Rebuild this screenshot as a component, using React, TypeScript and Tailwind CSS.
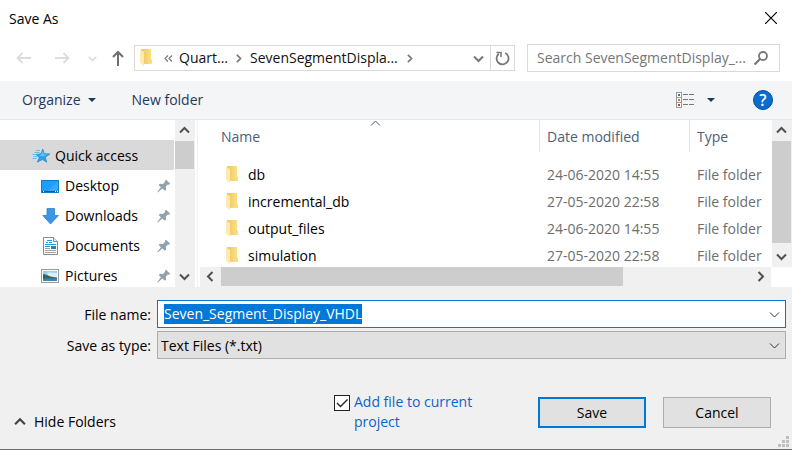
import { useEffect, useRef } from "react";
import type { ReactNode } from "react";

type ChevronProps = { dir: "up" | "down" | "left" | "right"; className: string; width?: number };

const chevronPoints = {
  up: "1,7.5 5.5,3 10,7.5",
  down: "1,3.5 5.5,8 10,3.5",
  left: "7.5,1 3,5.5 7.5,10",
  right: "3.5,1 8,5.5 3.5,10",
};

function Chevron({ dir, className, width = 2 }: ChevronProps) {
  return (
    <svg viewBox="0 0 11 11" className={className} fill="none" stroke="currentColor" strokeWidth={width} aria-hidden="true">
      <polyline points={chevronPoints[dir]} />
    </svg>
  );
}

function FolderIcon() {
  return (
    <svg viewBox="0 0 12 18" className="h-[18px] w-3 shrink-0" aria-hidden="true">
      <defs>
        <linearGradient id="folder-body" x1="0" x2="1">
          <stop offset="0.2" stopColor="#f0cb69" />
          <stop offset="0.8" stopColor="#fbdc7e" />
        </linearGradient>
      </defs>
      <path d="M1 0h10v10l1 1v4H3L1 12z" fill="url(#folder-body)" />
      <path d="M0 1l4 2v14l-1.500-1L0 13.500z" fill="#ffeab0" />
    </svg>
  );
}

function PinIcon() {
  return (
    <svg viewBox="0 0 14 14" className="size-[14px]" aria-hidden="true">
      <path d="M9 0.800l4.200 4-1.200 1-1.200-0.200-2 2.200 0.400 2.600-1.200 1.400-2.700-2.400L0.800 13.400l-0.500-0.500 3.600-4.600-2.200-2.300 1.300-1.200 2.900 0.200L8 2.900 7.900 1.800z" fill="#93a1ab" />
    </svg>
  );
}

function StarIcon() {
  return (
    <svg viewBox="0 0 19 16" className="h-4 w-[19px]" aria-hidden="true">
      <path d="M10.800 1l1.500 4.700 5.600 0.300-4.500 3.200 1.300 5-4.300-2.800-5 2.800 1.900-5-3.300-2.800 4.800-0.500z" fill="#2ba3ec" stroke="#1d8ad2" strokeWidth="0.700" />
      <path d="M10.700 3l1.200 3.500 3.800 0.300-5.200 1.500-3.300-0.800 2.100-0.700z" fill="#63c7fb" />
      <path d="M4 2.500h4M2.500 4.500h5M0.500 6.500h4M1.500 8.500h4M0.500 10.500h4" stroke="#51b0ea" strokeWidth="0.800" />
    </svg>
  );
}

function DesktopIcon() {
  return (
    <svg viewBox="0 0 18 13" className="h-[13px] w-[18px]" aria-hidden="true">
      <rect x="0.500" y="0.500" width="17" height="12" fill="#1e9dfd" stroke="#0f7bc9" />
      <path d="M17 1v10H7z" fill="#35aaff" />
      <path d="M1 11.500h16" stroke="#0a5a9c" />
      <path d="M2 11.500h1M14 11.500h1M16 11.500h1" stroke="#fff" />
    </svg>
  );
}

function DownloadIcon() {
  return (
    <svg viewBox="0 0 17 17" className="size-[17px]" aria-hidden="true">
      <path d="M5 0.500h7.500v7h4L8.500 16 0.800 7.500H5z" fill="#3b97e6" stroke="#2f80cc" strokeWidth="0.800" />
    </svg>
  );
}

function DocumentIcon() {
  return (
    <svg viewBox="0 0 15 18" className="h-[18px] w-[15px]" aria-hidden="true">
      <path d="M0.500 0.500h10l4 4v13h-14z" fill="#fff" stroke="#8a8a8a" />
      <path d="M10.500 0.500v4h4" fill="#eee" stroke="#8a8a8a" />
      <path d="M4 3.500h5M3 5.500h2M6 5.500h3M2 7.500h11M2 9.500h5" stroke="#2796e0" />
      <rect x="8" y="9" width="5" height="3" fill="#2b7fb5" />
      <path d="M2 11.500h5M2 13.500h11M2 15.500h11" stroke="#a0a0a0" />
    </svg>
  );
}

function PictureIcon() {
  return (
    <svg viewBox="0 0 18 14" className="h-[14px] w-[18px]" aria-hidden="true">
      <rect x="0.500" y="0.500" width="17" height="13" fill="#fff" stroke="#9a9a9a" />
      <rect x="2" y="2" width="14" height="10" fill="#9ad0f6" />
      <path d="M6 4c4-1 7 0 10 0v4H8z" fill="#dceffc" />
      <path d="M2 5c3 0 6 3 14 3.500V10H2z" fill="#34674f" />
      <path d="M2 10c4-1 9 0 14-1v3H2z" fill="#3f83bd" />
    </svg>
  );
}

type Place = { name: string; icon: ReactNode };

const places: Place[] = [
  { name: "Desktop", icon: <DesktopIcon /> },
  { name: "Downloads", icon: <DownloadIcon /> },
  { name: "Documents", icon: <DocumentIcon /> },
  { name: "Pictures", icon: <PictureIcon /> },
];

const files = [
  { name: "db", date: "24-06-2020 14:55" },
  { name: "incremental_db", date: "27-05-2020 22:58" },
  { name: "output_files", date: "24-06-2020 14:55" },
  { name: "simulation", date: "27-05-2020 22:58" },
];

function VerticalScrollbar({ thumb }: { thumb: string }) {
  return (
    <div className="flex w-5 shrink-0 flex-col bg-[#f0f0f0] pr-px text-[#505050]">
      <button aria-label="Scroll up" className="flex h-[21px] shrink-0 items-center justify-center">
        <Chevron dir="up" className="size-[11px]" />
      </button>
      <div className="flex-1">
        <div className={`${thumb} bg-[#cdcdcd]`} />
      </div>
      <button aria-label="Scroll down" className="flex h-[21px] shrink-0 items-center justify-center">
        <Chevron dir="down" className="size-[11px]" />
      </button>
    </div>
  );
}

function TitleBar() {
  return (
    <header className="flex h-9 items-center justify-between pr-[14px] pl-[9px]">
      <h1 className="pt-[2px]">Save As</h1>
      <button aria-label="Close" className="p-px">
        <svg viewBox="0 0 12 12" className="size-3" stroke="#000" strokeWidth="1.200" aria-hidden="true">
          <path d="M0 0l12 12M12 0L0 12" />
        </svg>
      </button>
    </header>
  );
}

function NavigationBar() {
  return (
    <nav className="flex h-[45px] items-center pr-3 pb-[1px] pl-4">
      <button aria-label="Back" className="w-[15px] text-[#dcdcdc]">
        <svg viewBox="0 0 15 12" className="h-3 w-[15px]" fill="none" stroke="currentColor" strokeWidth="1.800" aria-hidden="true">
          <path d="M15 6H1.500M6.500 1l-5 5 5 5" />
        </svg>
      </button>
      <button aria-label="Forward" className="ml-6 w-[15px] text-[#dcdcdc]">
        <svg viewBox="0 0 15 12" className="h-3 w-[15px]" fill="none" stroke="currentColor" strokeWidth="1.800" aria-hidden="true">
          <path d="M0 6h13.500M8.500 1l5 5-5 5" />
        </svg>
      </button>
      <button aria-label="Recent locations" className="ml-[18px] text-[#dcdcdc]">
        <Chevron dir="down" className="size-[9px]" />
      </button>
      <button aria-label="Up" className="ml-[15px] text-[#6e6e6e]">
        <svg viewBox="0 0 12 16" className="h-4 w-3" fill="none" stroke="currentColor" strokeWidth="2" aria-hidden="true">
          <path d="M6 16V2M1 7l5-5 5 5" />
        </svg>
      </button>
      <div className="ml-[10px] flex h-[26px] min-w-0 flex-1 items-stretch border border-[#d9d9d9] text-[#111]">
        <div className="flex min-w-0 flex-1 items-center overflow-hidden pl-[5px]">
          <FolderIcon />
          <svg viewBox="0 0 9 7" className="ml-3 h-[7px] w-[9px] shrink-0" fill="none" stroke="#777" strokeWidth="1.200" aria-hidden="true">
            <path d="M4 0.500l-3 3 3 3M8 0.500l-3 3 3 3" />
          </svg>
          <button className="ml-[6px] shrink-0">Quart...</button>
          <Chevron dir="right" className="ml-[6px] size-[9px] shrink-0 text-[#777]" />
          <button className="ml-[7px] shrink-0">SevenSegmentDispla...</button>
          <Chevron dir="right" className="ml-[7px] size-[9px] shrink-0 text-[#777]" />
        </div>
        <button aria-label="Previous locations" className="px-[6px] text-[#777]">
          <Chevron dir="down" className="size-[11px]" />
        </button>
        <button aria-label="Refresh" className="flex w-6 items-center justify-center border-l border-[#d9d9d9]">
          <svg viewBox="0 0 15 15" className="size-[15px]" fill="none" stroke="#777" strokeWidth="1.800" aria-hidden="true">
            <path d="M10.200 2a6 6 0 1 1-6.400 0.700" />
            <path d="M1.500 1.500H6v4.500" strokeWidth="1.500" />
          </svg>
        </button>
      </div>
      <div className="ml-3 flex h-7 w-[253px] items-center border border-[#d9d9d9] pr-[11px] pl-[9px]">
        <input
          type="text"
          aria-label="Search"
          placeholder="Search SevenSegmentDisplay_..."
          className="min-w-0 flex-1 outline-none placeholder:text-[#767676]"
        />
        <svg viewBox="0 0 14 14" className="size-[14px] shrink-0" fill="none" stroke="#777" aria-hidden="true">
          <circle cx="9" cy="5" r="4" strokeWidth="1.800" />
          <path d="M6 8l-5.500 5.500" strokeWidth="2.200" />
        </svg>
      </div>
    </nav>
  );
}

function Toolbar() {
  return (
    <div className="flex h-[39px] items-center border-b border-[#e5e6e8] bg-[#f4f5f7] pr-[19px] pl-[22px] text-[#1e395b]">
      <button className="flex items-center gap-[7px]">
        Organize
        <svg viewBox="0 0 8 4" className="h-1 w-2" aria-hidden="true">
          <path d="M0 0h8L4 4z" fill="currentColor" />
        </svg>
      </button>
      <button className="ml-9">New folder</button>
      <div className="flex-1" />
      <button aria-label="Change view">
        <svg viewBox="0 0 18 16" className="h-4 w-[18px]" shapeRendering="crispEdges" aria-hidden="true">
          <path d="M0.500 0.500h5v5h-5zM0.500 5.500h5v5h-5zM0.500 10.500h5v5h-5z" fill="#fff" stroke="#999" />
          <path d="M7 2.500h5M13 2.500h5M7 7.500h5M13 7.500h5M7 12.500h5M13 12.500h5" stroke="#777" />
          <path d="M2 2h2v2H2z" fill="#2779b8" />
          <path d="M2 7h2v2H2z" fill="#b78332" />
          <path d="M2 12h2v2H2z" fill="#d03a1c" />
        </svg>
      </button>
      <button aria-label="More view options" className="ml-[13px]">
        <svg viewBox="0 0 8 4" className="h-1 w-2" aria-hidden="true">
          <path d="M0 0h8L4 4z" fill="currentColor" />
        </svg>
      </button>
      <button
        aria-label="Help"
        className="ml-[38px] flex size-5 items-center justify-center rounded-full border border-[#084f96] bg-[#0a6ccf] text-base font-semibold text-white"
      >
        ?
      </button>
    </div>
  );
}

function FolderTree() {
  return (
    <aside className="flex w-[195px] shrink-0">
      <ul className="min-w-0 flex-1 overflow-hidden pt-5 pr-px">
        <li className="flex h-[30px] items-center gap-1 bg-[#d9d9d9] pt-[2px] pl-8">
          <StarIcon />
          Quick access
        </li>
        {places.map((place) => (
          <li key={place.name} className="flex h-[30px] items-center pt-[2px] pr-[3px] pl-10">
            <span className="flex w-5 justify-center">{place.icon}</span>
            <span className="flex-1 pl-[5px]">{place.name}</span>
            <PinIcon />
          </li>
        ))}
      </ul>
      <VerticalScrollbar thumb="h-7" />
    </aside>
  );
}

function FileList() {
  return (
    <section className="ml-[2px] flex min-w-0 flex-1 flex-col border-l border-[#f0f0f0] pl-[2px]">
      <div className="flex h-[147px]">
        <div className="min-w-0 flex-1 overflow-hidden">
          <table className="w-full table-fixed border-collapse text-left whitespace-nowrap">
            <thead className="text-[#4c607a]">
              <tr>
                <th className="h-[41px] p-0 align-top font-normal">
                  <div className="relative flex h-8 items-center border-r border-[#e5e5e5] pt-px pl-[21px]">
                    Name
                    <Chevron dir="up" width={1} className="absolute -top-[2px] left-1/2 size-[11px] text-[#555]" />
                  </div>
                </th>
                <th className="w-[150px] p-0 align-top font-normal">
                  <div className="flex h-8 items-center border-r border-[#e5e5e5] pt-px pl-[7px]">Date modified</div>
                </th>
                <th className="w-[82px] p-0 align-top font-normal">
                  <div className="flex h-8 items-center pt-px pl-[7px]">Type</div>
                </th>
              </tr>
            </thead>
            <tbody>
              {files.map((file) => (
                <tr key={file.name} className="h-[27px]">
                  <td className="p-0">
                    <div className="flex items-center gap-[10px] pl-[26px]">
                      <FolderIcon />
                      {file.name}
                    </div>
                  </td>
                  <td className="p-0 pl-[7px] text-[#6d6d6d]">{file.date}</td>
                  <td className="p-0 pl-[7px] text-[#6d6d6d]">File folder</td>
                </tr>
              ))}
            </tbody>
          </table>
        </div>
        <VerticalScrollbar thumb="h-[102px]" />
      </div>
      <div className="mr-[21px] flex h-5 bg-[#f0f0f0] pb-px text-[#505050]">
        <button aria-label="Scroll left" className="flex w-[21px] items-center justify-center">
          <Chevron dir="left" className="size-[11px]" />
        </button>
        <div className="flex-1">
          <div className="h-full w-[76%] bg-[#cdcdcd]" />
        </div>
        <button aria-label="Scroll right" className="flex w-[21px] items-center justify-center">
          <Chevron dir="right" className="size-[11px]" />
        </button>
      </div>
    </section>
  );
}

function SaveForm() {
  const nameRef = useRef<HTMLInputElement>(null);

  useEffect(() => {
    nameRef.current?.focus();
    nameRef.current?.select();
  }, []);

  return (
    <form className="flex flex-1 flex-col bg-[#f0f0f0]" onSubmit={(event) => event.preventDefault()}>
      <div className="grid grid-cols-[151px_1fr] items-center gap-x-[6px] gap-y-[3px] pt-[13px] pr-[6px]">
        <label htmlFor="file-name" className="pt-[2px] text-right">
          File name:
        </label>
        <div className="flex h-7 items-center border border-[#0078d7] bg-white pr-[5px] pl-[6px]">
          <input
            ref={nameRef}
            id="file-name"
            type="text"
            defaultValue="Seven_Segment_Display_VHDL"
            className="min-w-0 flex-1 caret-transparent outline-none selection:bg-[#0078d7] selection:text-white"
          />
          <button type="button" aria-label="Previous file names">
            <Chevron dir="down" width={1} className="size-[11px] text-[#333]" />
          </button>
        </div>
        <label htmlFor="file-type" className="pt-[2px] text-right">
          Save as type:
        </label>
        <div className="relative">
          <select
            id="file-type"
            className="block h-7 w-full appearance-none rounded-none border border-[#adadad] bg-[#e1e1e1] pt-[2px] pr-6 pl-[3px] outline-none"
          >
            <option>Text Files (*.txt)</option>
          </select>
          <Chevron dir="down" width={1} className="pointer-events-none absolute top-[9px] right-[6px] size-[11px] text-[#333]" />
        </div>
      </div>
      <div className="flex flex-1 items-end pr-[21px] pb-[17px] pl-[14px]">
        <button type="button" className="flex items-center gap-2">
          <Chevron dir="up" className="size-[12px] text-[#444]" />
          Hide Folders
        </button>
        <div className="flex-1" />
        <div className="mr-[43px] flex w-[161px] items-start gap-1">
          <span className="relative mt-[3px] size-4 shrink-0">
            <input
              id="add-file"
              type="checkbox"
              defaultChecked
              className="peer block size-4 appearance-none border border-[#222] bg-white"
            />
            <svg
              viewBox="0 0 16 16"
              className="pointer-events-none absolute inset-0 hidden size-4 peer-checked:block"
              fill="none"
              stroke="#222"
              strokeWidth="1.400"
              aria-hidden="true"
            >
              <path d="M3 8l3.500 3.500 7-7" />
            </svg>
          </span>
          <label htmlFor="add-file" className="flex-1 text-[#0f63c6]">
            Add file to current project
          </label>
        </div>
        <button type="submit" className="mb-1 h-[31px] w-[108px] border-2 border-[#0078d7] bg-[#e1e1e1]">
          Save
        </button>
        <button type="button" className="mb-1 ml-[17px] h-[31px] w-[108px] border border-[#adadad] bg-[#e1e1e1]">
          Cancel
        </button>
      </div>
    </form>
  );
}

export default function App() {
  return (
    <main className="relative flex min-h-screen flex-col border-b border-[#6b6b6b] bg-white font-['Open_Sans','Noto_Sans',sans-serif] text-[14px] leading-5 text-black">
      <TitleBar />
      <NavigationBar />
      <Toolbar />
      <div className="flex h-[167px]">
        <FolderTree />
        <FileList />
      </div>
      <SaveForm />
      <svg viewBox="0 0 11 11" className="absolute right-[3px] bottom-[2px] size-[11px]" fill="#bfbfbf" shapeRendering="crispEdges" aria-hidden="true">
        <path d="M8 0h3v3H8zM4 4h3v3H4zM8 4h3v3H8zM0 8h3v3H0zM4 8h3v3H4zM8 8h3v3H8z" />
      </svg>
    </main>
  );
}
